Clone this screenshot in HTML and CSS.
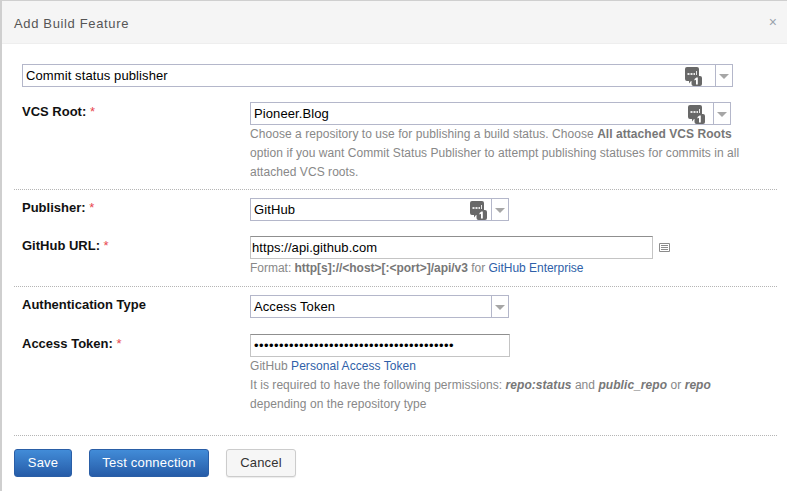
FILE: index.html
```html
<!DOCTYPE html>
<html lang="en">
<head>
<meta charset="utf-8">
<title>Add Build Feature</title>
<link rel="stylesheet" href="styles.css">
</head>
<body>
<svg class="defs" width="0" height="0" aria-hidden="true">
  <symbol id="badge" viewBox="0 0 17 19">
    <path d="M2 0h10a2 2 0 0 1 2 2v10a2 2 0 0 1-2 2H6l-2 2.500V14H2a2 2 0 0 1-2-2V2a2 2 0 0 1 2-2z" fill="#686868"/>
    <path d="M2.500 6h2v2h-2zM5.500 6h2v2h-2zM8.500 6h1.500v2H8.500zM11 4h1v4h-1z" fill="#e8e8e8"/>
    <rect x="6.500" y="9" width="10.500" height="10" rx="2" fill="#686868"/>
    <path d="M12.800 10.500V17.500H11V12.800l-1.500.8v-1.500l2-1.600z" fill="#fff"/>
  </symbol>
</svg>
<div class="dialog">
  <header class="head">
    <h1 class="title">Add Build Feature</h1>
    <span class="close">×</span>
  </header>
  <main class="body">
    <div class="select select-top">
      <span class="select-text">Commit status publisher</span>
      <svg class="badge"><use href="#badge"/></svg>
      <span class="arrow"></span>
    </div>

    <section class="group group-vcs">
      <div class="row">
        <div class="label">VCS Root: <span class="req">*</span></div>
        <div class="field">
          <div class="select select-vcs">
            <span class="select-text">Pioneer.Blog</span>
            <svg class="badge"><use href="#badge"/></svg>
            <span class="arrow"></span>
          </div>
          <p class="help">Choose a repository to use for publishing a build status. Choose <b>All attached VCS Roots</b><br>option if you want Commit Status Publisher to attempt publishing statuses for commits in all<br>attached VCS roots.</p>
        </div>
      </div>
    </section>

    <section class="group group-publisher">
      <div class="row row-publisher">
        <div class="label">Publisher: <span class="req">*</span></div>
        <div class="field">
          <div class="select select-short">
            <span class="select-text">GitHub</span>
            <svg class="badge"><use href="#badge"/></svg>
            <span class="arrow"></span>
          </div>
        </div>
      </div>
      <div class="row">
        <div class="label">GitHub URL: <span class="req">*</span></div>
        <div class="field">
          <div class="input-line">
            <div class="input input-url">https://api.github.com</div>
            <svg class="list-icon" viewBox="0 0 11 9" width="11" height="9">
              <path d="M.5.500h10v8H.5z" fill="none" stroke="#8c8c8c"/>
              <path d="M2 2.500h7M2 4.500h7M2 6.500h7" stroke="#8c8c8c"/>
            </svg>
          </div>
          <p class="help help-format">Format: <b>http[s]://&lt;host&gt;[:&lt;port&gt;]/api/v3</b> for <a href="#">GitHub Enterprise</a></p>
        </div>
      </div>
    </section>

    <section class="group group-auth">
      <div class="row row-auth">
        <div class="label">Authentication Type</div>
        <div class="field">
          <div class="select select-short">
            <span class="select-text">Access Token</span>
            <span class="arrow"></span>
          </div>
        </div>
      </div>
      <div class="row">
        <div class="label">Access Token: <span class="req">*</span></div>
        <div class="field">
          <div class="input input-token">••••••••••••••••••••••••••••••••••••••••</div>
          <p class="help">GitHub <a href="#">Personal Access Token</a><br>It is required to have the following permissions: <b><i>repo:status</i></b> and <b><i>public_repo</i></b> or <b><i>repo</i></b><br>depending on the repository type</p>
        </div>
      </div>
    </section>

    <footer class="actions">
      <button class="btn btn-primary btn-save" type="button">Save</button>
      <button class="btn btn-primary btn-test" type="button">Test connection</button>
      <button class="btn btn-cancel" type="button">Cancel</button>
    </footer>
  </main>
</div>
</body>
</html>
```
FILE: styles.css
```css
* { box-sizing: border-box; }
html, body { margin: 0; height: 100%; }
body {
  background: #fff;
  font-family: "Liberation Sans", Arial, sans-serif;
  font-size: 12px;
  color: #000;
  overflow: hidden;
}
.defs { position: absolute; }
.dialog {
  width: 787px;
  height: 491px;
  border-left: 2px solid #cfcfcf;
  border-top: 1px solid #cfcfcf;
  display: flex;
  flex-direction: column;
}
.head {
  height: 43px;
  flex: none;
  background: #f5f5f5;
  border-bottom: 1px solid #eee;
  padding: 0 10px 0 12px;
  display: flex;
  align-items: center;
  justify-content: space-between;
}
.title {
  margin: 2px 0 0;
  font-size: 13px;
  font-weight: normal;
  color: #555;
  letter-spacing: .65px;
}
.close {
  font-size: 14px;
  color: #9aa3ad;
  line-height: 1;
}
.body {
  flex: 1;
  padding: 20px 10px 0 12px;
}
.select {
  height: 23px;
  border: 1px solid #b4b7ca;
  display: flex;
  align-items: center;
  background: #fff;
  padding-left: 3px;
  font-size: 13px;
  color: #000;
  letter-spacing: .1px;
}
.select-text { flex: 1; }
.select-top { margin: 0 44px 0 8px; }
.select-top .badge { margin-right: 13px; }
.select-vcs { width: 481px; }
.select-vcs .badge { margin-right: 8px; }
.select-short { width: 259px; }
.badge {
  width: 17px;
  height: 19px;
  margin: 1px 4px 0 0;
  flex: none;
}
.arrow {
  width: 17px;
  height: 21px;
  flex: none;
  border-left: 1px solid #b4b7ca;
  position: relative;
}
.arrow::after {
  content: "";
  position: absolute;
  left: 3px;
  top: 9px;
  border-left: 5px solid transparent;
  border-right: 5px solid transparent;
  border-top: 5px solid #a6a6a6;
}
.group {
  margin-left: 0;
  border-bottom: 1px dotted #b5b5b5;
}
.group-vcs { padding-top: 15px; height: 103px; }
.group-publisher { padding-top: 8px; height: 97px; }
.group-auth { padding-top: 8px; height: 149px; }
.row {
  display: grid;
  grid-template-columns: 236px 1fr;
}
.row-publisher { height: 38px; }
.row-auth { height: 39px; }
.label {
  padding: 2px 0 0 8px;
  font-size: 13px;
  font-weight: bold;
  line-height: 15px;
  color: #111;
}
.req {
  color: #e8464f;
  font-weight: normal;
}
.field { min-width: 0; }
.help {
  margin: 0;
  font-size: 12px;
  line-height: 19px;
  color: #888;
  letter-spacing: .055px;
}
.help-format { letter-spacing: -.02px; }
.help b { font-weight: bold; color: #777; }
.help a { color: #2f5fa8; text-decoration: none; }
.input {
  height: 23px;
  border: 1px solid #c4c4c4;
  border-top-color: #8f8f8f;
  padding-left: 1px;
  font-size: 13px;
  line-height: 21px;
  background: #fff;
  letter-spacing: .07px;
}
.input-line {
  display: flex;
  align-items: center;
  gap: 6px;
}
.input-url { width: 403px; }
.input-token { width: 260px; padding-left: 3px; letter-spacing: .45px; font-size: 13px; }
.list-icon { flex: none; }
.actions {
  padding: 13px 0 0;
  display: flex;
  gap: 17px;
}
.btn {
  height: 28px;
  border-radius: 3px;
  font: 13px "Liberation Sans", Arial, sans-serif;
  padding: 0 0 2px;
  letter-spacing: .2px;
}
.btn-primary {
  color: #fff;
  background: linear-gradient(#428cd8, #265ca8);
  border: 1px solid #2a5ea6;
}
.btn-save { width: 58px; }
.btn-test { width: 120px; }
.btn-cancel {
  width: 70px;
  color: #333;
  background: #f6f6f6;
  border: 1px solid #ccc;
  box-shadow: 0 1px 1px rgba(0,0,0,.08);
}
```
